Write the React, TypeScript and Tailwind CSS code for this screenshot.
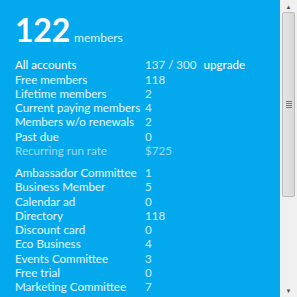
const stats = [
  { label: 'All accounts', value: '137 / 300', extra: 'upgrade', strong: true },
  { label: 'Free members', value: '118' },
  { label: 'Lifetime members', value: '2' },
  { label: 'Current paying members', value: '4' },
  { label: 'Members w/o renewals', value: '2' },
  { label: 'Past due', value: '0' },
  { label: 'Recurring run rate', value: '$725', faded: true },
]

const levels = [
  { label: 'Ambassador Committee', value: '1' },
  { label: 'Business Member', value: '5' },
  { label: 'Calendar ad', value: '0' },
  { label: 'Directory', value: '118' },
  { label: 'Discount card', value: '0' },
  { label: 'Eco Business', value: '4' },
  { label: 'Events Committee', value: '3' },
  { label: 'Free trial', value: '0' },
  { label: 'Marketing Committee', value: '7' },
]

type Row = { label: string; value: string; extra?: string; strong?: boolean; faded?: boolean }

function StatRow({ row }: { row: Row }) {
  return (
    <div className={`flex h-[14.25px] items-center ${row.faded ? 'text-white/60' : 'text-white/90'}`}>
      <div className={`w-[130px] shrink-0 whitespace-nowrap ${row.strong ? 'text-white' : ''}`}>{row.label}</div>
      <div className={row.faded ? '' : 'text-white/80'}>{row.value}</div>
      {row.extra && <div className="ml-[7px] text-white">{row.extra}</div>}
    </div>
  )
}

export default function App() {
  return (
    <div className="flex h-[297px] w-[297px] overflow-hidden bg-[#03a9ec] font-['Lato','Liberation_Sans',sans-serif]">
      <div className="flex-1 pl-[15px] pt-[14px] text-[11.6px] leading-none">
        {/* 頂部數字 */}
        <div className="flex items-end text-white">
          <span className="text-[32px] font-bold leading-none tracking-[-0.2px]">122</span>
          <span className="mb-[2px] ml-[4px] text-[12px] text-white/85">members</span>
        </div>

        <div className="mt-[12px]">
          {stats.map((r) => (
            <StatRow key={r.label} row={r} />
          ))}
        </div>

        <div className="mt-[8px]">
          {levels.map((r) => (
            <StatRow key={r.label} row={r} />
          ))}
        </div>
      </div>

      {/* scrollbar */}
      <div className="flex w-[17px] flex-col items-center bg-[#f0f0f0]">
        <div className="flex h-[12px] items-center justify-center text-[6px] text-[#505050]">▲</div>
        <div className="flex h-[185px] w-[13px] items-center justify-center rounded-[2px] border border-[#bcbcbc] bg-gradient-to-r from-[#e4e4e4] to-[#d8d8d8]">
          <div className="flex flex-col gap-[1px]">
            <div className="h-px w-[6px] bg-[#777]" />
            <div className="h-px w-[6px] bg-[#777]" />
            <div className="h-px w-[6px] bg-[#777]" />
            <div className="h-px w-[6px] bg-[#777]" />
          </div>
        </div>
        <div className="flex-1" />
        <div className="flex h-[14px] items-center justify-center text-[6px] text-[#505050]">▼</div>
      </div>
    </div>
  )
}
